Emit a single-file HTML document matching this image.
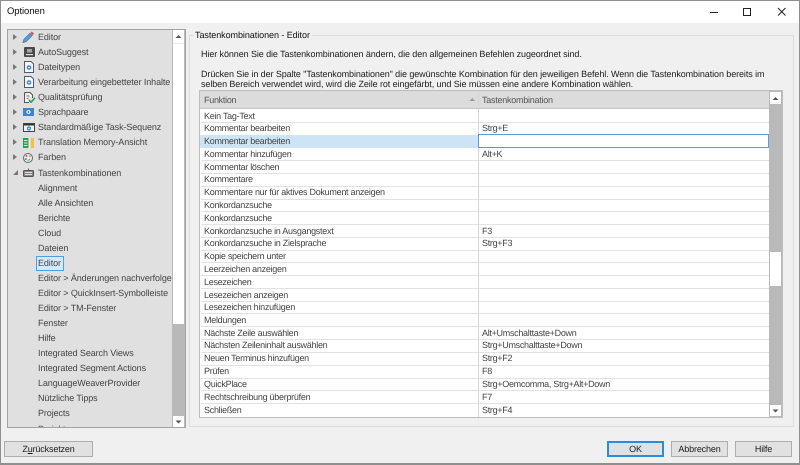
<!DOCTYPE html>
<html><head><meta charset="utf-8">
<style>
html,body{margin:0;padding:0;width:800px;height:465px;overflow:hidden;background:#f0f0f0}
body{position:relative;font-family:"Liberation Sans",sans-serif;font-size:9px;color:#3c3c3c;text-rendering:geometricPrecision}
div,span,svg{position:absolute;box-sizing:border-box;white-space:nowrap}
#w{left:0;top:0;width:800px;height:465px;filter:blur(.3px)}
.t{line-height:12px;height:12px}
.tr{left:38px;color:#444;font-size:9px;letter-spacing:-.1px}
.arr{left:13px;width:0;height:0;border-left:4px solid #777;border-top:3.500px solid transparent;border-bottom:3.500px solid transparent}
.c1{left:204px;color:#444;font-size:9px;letter-spacing:-.28px}
.c2{left:482px;color:#444;font-size:9px;letter-spacing:-.3px}
.ln{left:201px;width:568px;height:1px;background:#e2e2e2}
.d{color:#1c1c1c;font-size:9px;left:201px;letter-spacing:-.09px}
.btn{background:#e1e1e1;border:1px solid #adadad;text-align:center;line-height:14px;color:#1c1c1c;font-size:9px;letter-spacing:-.15px}
.sb{background:#fff}
</style></head><body><div id="w">
<!-- window -->
<div style="left:0;top:0;width:800px;height:465px;border:1px solid #8f8f8f;border-bottom-width:2px;background:#f0f0f0"></div>
<div style="left:1px;top:1px;width:798px;height:22px;background:#fff"></div>
<div class="t" style="left:7px;top:6px;font-size:9.500px;color:#111;letter-spacing:-.1px">Optionen</div>
<svg style="left:700px;top:3px" width="96" height="18" viewBox="0 0 96 18" fill="none" stroke="#222">
<path d="M10 9.500h8"/><path d="M43.500 5.500h7v7h-7z"/><path d="M78 5l7.500 7.500M85.500 5L78 12.500"/></svg>

<!-- left tree -->
<div style="left:7px;top:29px;width:179px;height:399px;background:#e0e0e0;border:1px solid #a3a3a3;overflow:hidden">
 <div class="tr t" style="left:30px;top:393px;color:#555">Projekte</div>
</div>
<div style="left:172px;top:30px;width:13px;height:397px;background:#b9b9b9"></div>
<div class="sb" style="left:173px;top:30px;width:11px;height:294px"></div>
<div class="sb" style="left:173px;top:416px;width:11px;height:11px"></div>
<div style="left:173px;top:43px;width:11px;height:1px;background:#ececec"></div>
<svg style="left:173px;top:33px" width="11" height="6"><path d="M2.500 5h6L5.500 2z" fill="#555"/></svg>
<svg style="left:173px;top:419px" width="11" height="6"><path d="M2.500 1.500h6L5.500 4.500z" fill="#555"/></svg>

<div class="arr" style="top:33.500px"></div><div class="arr" style="top:48.500px"></div><div class="arr" style="top:63.500px"></div><div class="arr" style="top:78.500px"></div><div class="arr" style="top:93.500px"></div><div class="arr" style="top:108.500px"></div><div class="arr" style="top:123.500px"></div><div class="arr" style="top:138.500px"></div><div class="arr" style="top:153.500px"></div>
<svg style="left:12px;top:169px" width="7" height="7"><path d="M1 6h5V1z" fill="#777"/></svg>

<!-- tree icons -->
<svg style="left:22px;top:31px" width="13" height="13"><path d="M.8 11.700l1-3.300 6.200-6.200 2.300 2.300-6.200 6.200z" fill="#5b9bd5" stroke="#3f6f9f" stroke-width=".6"/><path d="M8.500 1.800l1.300-1.300 2.300 2.300-1.300 1.300z" fill="#e04a3a"/></svg>
<svg style="left:24px;top:47px" width="11" height="10"><rect x="0" y="0" width="11" height="10" rx="1" fill="#4a4a4a"/><rect x="3" y="2" width="5" height="3.500" fill="#a5a5a5"/><rect x="2" y="7" width="7" height="1.200" fill="#ddd"/></svg>
<svg style="left:24px;top:61px" width="10" height="12"><path d="M.5.500h6.500l2.500 2.500v8.500H.5z" fill="#f5f5f5" stroke="#4d5b6b"/><circle cx="5" cy="6.500" r="2.300" fill="#3d85c6"/><circle cx="5" cy="6.500" r=".9" fill="#fff"/></svg>
<svg style="left:24px;top:76px" width="10" height="12"><path d="M.5.500h6.500l2.500 2.500v8.500H.5z" fill="#f5f5f5" stroke="#4d5b6b"/><circle cx="5" cy="6.500" r="2.300" fill="#3d85c6"/><circle cx="5" cy="6.500" r=".9" fill="#fff"/></svg>
<svg style="left:24px;top:92px" width="12" height="11"><path d="M.5.500h5.500l2.500 2.500V6M5 10.500H.5V.500" fill="#f5f5f5" stroke="#555"/><path d="M2.500 4h3M2.500 6.500h2" stroke="#888"/><path d="M5 8l2 2.300 4-4.500" fill="none" stroke="#1f9d55" stroke-width="1.500"/></svg>
<svg style="left:23px;top:108px" width="11" height="8"><rect x="0" y="0" width="11" height="8" fill="#3d85c6"/><circle cx="5.500" cy="4" r="2.100" fill="#dceaf7"/><rect x="5" y="2.800" width="1" height="2.400" fill="#3d85c6"/></svg>
<svg style="left:23px;top:123px" width="12" height="9"><rect x=".5" y=".5" width="11" height="8" fill="#eef3f8" stroke="#444"/><rect x="1" y="1" width="10" height="1.500" fill="#333"/><circle cx="6" cy="5.500" r="2.100" fill="#3d85c6"/><circle cx="6" cy="5.500" r=".8" fill="#fff"/></svg>
<svg style="left:23px;top:138px" width="11" height="10"><rect x="0" y="0" width="5.500" height="10" fill="#2e9e4f"/><rect x="5.500" y="0" width="2" height="10" fill="#eee"/><rect x="7.500" y="0" width="3.500" height="10" fill="#f0c24b"/><path d="M1 2.500h3.500M1 5h3.500M1 7.500h3.500" stroke="#d5f0dd"/></svg>
<svg style="left:23px;top:153px" width="10" height="10"><circle cx="5" cy="5" r="4.500" fill="#eee" stroke="#666"/><circle cx="3.500" cy="3" r="1" fill="#d9534f"/><circle cx="6.800" cy="3.300" r="1" fill="#e0a030"/><circle cx="2.800" cy="6" r="1" fill="#3d85c6"/><path d="M4.500 8l2.500-2" stroke="#4a9"/></svg>
<svg style="left:23px;top:168px" width="11" height="9"><path d="M5.500 3V.5" stroke="#666"/><rect x=".5" y="2.500" width="10" height="6" rx="1" fill="#888" stroke="#555"/><path d="M2 4.500h7M2 6.500h7" stroke="#ddd"/></svg>

<div class="tr t" style="top:31px">Editor</div>
<div class="tr t" style="top:46px">AutoSuggest</div>
<div class="tr t" style="top:61px">Dateitypen</div>
<div class="tr t" style="top:76px">Verarbeitung eingebetteter Inhalte</div>
<div class="tr t" style="top:91px">Qualitätsprüfung</div>
<div class="tr t" style="top:106px">Sprachpaare</div>
<div class="tr t" style="top:121px">Standardmäßige Task-Sequenz</div>
<div class="tr t" style="top:136px">Translation Memory-Ansicht</div>
<div class="tr t" style="top:151px">Farben</div>
<div class="tr t" style="top:167px">Tastenkombinationen</div>
<div class="tr t" style="top:182px">Alignment</div>
<div class="tr t" style="top:197px">Alle Ansichten</div>
<div class="tr t" style="top:212px">Berichte</div>
<div class="tr t" style="top:227px">Cloud</div>
<div class="tr t" style="top:242px">Dateien</div>
<div style="left:36px;top:256px;width:28px;height:15px;background:#d6e9f8;border:1px solid #4f9fdc"></div>
<div class="tr t" style="top:257px">Editor</div>
<div class="tr t" style="top:272px">Editor &gt; Änderungen nachverfolge</div>
<div class="tr t" style="top:287px">Editor &gt; QuickInsert-Symbolleiste</div>
<div class="tr t" style="top:302px">Editor &gt; TM-Fenster</div>
<div class="tr t" style="top:317px">Fenster</div>
<div class="tr t" style="top:332px">Hilfe</div>
<div class="tr t" style="top:347px">Integrated Search Views</div>
<div class="tr t" style="top:362px">Integrated Segment Actions</div>
<div class="tr t" style="top:377px">LanguageWeaverProvider</div>
<div class="tr t" style="top:392px">Nützliche Tipps</div>
<div class="tr t" style="top:407px">Projects</div>

<!-- group box -->
<div style="left:189px;top:35px;width:605px;height:392px;border:1px solid #dcdcdc"></div>
<div class="t" style="left:194px;top:29px;background:#f0f0f0;padding:0 2px 0 1px;color:#111;font-size:9px;letter-spacing:-.06px">Tastenkombinationen - Editor</div>
<div class="t d" style="top:48px">Hier können Sie die Tastenkombinationen ändern, die den allgemeinen Befehlen zugeordnet sind.</div>
<div class="t d" style="top:68px">Drücken Sie in der Spalte "Tastenkombinationen" die gewünschte Kombination für den jeweiligen Befehl. Wenn die Tastenkombination bereits im</div>
<div class="t d" style="top:78px">selben Bereich verwendet wird, wird die Zeile rot eingefärbt, und Sie müssen eine andere Kombination wählen.</div>

<!-- grid -->
<div style="left:199px;top:90px;width:584px;height:328px;background:#fff;border:1px solid #bdbdbd"></div>
<div style="left:200px;top:91px;width:569px;height:18px;background:#dcdcdc;border-bottom:1px solid #c4c4c4"></div>
<div style="left:478px;top:91px;width:1px;height:326px;background:#d6d6d6"></div>
<div class="t c1" style="top:94px;color:#555">Funktion</div>
<div class="t c2" style="top:94px;color:#555;letter-spacing:-.25px">Tastenkombination</div>
<svg style="left:469px;top:97px" width="7" height="5"><path d="M.5 4h5.500L3.250 1z" fill="#999"/></svg>

<div class="ln" style="top:122px"></div><div class="ln" style="top:135px"></div><div class="ln" style="top:147px"></div><div class="ln" style="top:160px"></div><div class="ln" style="top:173px"></div><div class="ln" style="top:186px"></div><div class="ln" style="top:199px"></div><div class="ln" style="top:211px"></div><div class="ln" style="top:224px"></div><div class="ln" style="top:237px"></div><div class="ln" style="top:250px"></div><div class="ln" style="top:262px"></div><div class="ln" style="top:275px"></div><div class="ln" style="top:288px"></div><div class="ln" style="top:301px"></div><div class="ln" style="top:313px"></div><div class="ln" style="top:326px"></div><div class="ln" style="top:339px"></div><div class="ln" style="top:352px"></div><div class="ln" style="top:365px"></div><div class="ln" style="top:378px"></div><div class="ln" style="top:390px"></div><div class="ln" style="top:403px"></div>
<div style="left:200px;top:135px;width:278px;height:13px;background:#cce4f5"></div>
<div style="left:478px;top:134px;width:291px;height:14px;background:#fff;border:1px solid #5a9fd4"></div>

<div class="t c1" style="top:110px">Kein Tag-Text</div>
<div class="t c1" style="top:122px">Kommentar bearbeiten</div><div class="t c2" style="top:122px">Strg+E</div>
<div class="t c1" style="top:135px">Kommentar bearbeiten</div>
<div class="t c1" style="top:148px">Kommentar hinzufügen</div><div class="t c2" style="top:148px">Alt+K</div>
<div class="t c1" style="top:161px">Kommentar löschen</div>
<div class="t c1" style="top:173px">Kommentare</div>
<div class="t c1" style="top:186px">Kommentare nur für aktives Dokument anzeigen</div>
<div class="t c1" style="top:199px">Konkordanzsuche</div>
<div class="t c1" style="top:212px">Konkordanzsuche</div>
<div class="t c1" style="top:225px">Konkordanzsuche in Ausgangstext</div><div class="t c2" style="top:225px">F3</div>
<div class="t c1" style="top:237px">Konkordanzsuche in Zielsprache</div><div class="t c2" style="top:237px">Strg+F3</div>
<div class="t c1" style="top:250px">Kopie speichern unter</div>
<div class="t c1" style="top:263px">Leerzeichen anzeigen</div>
<div class="t c1" style="top:276px">Lesezeichen</div>
<div class="t c1" style="top:289px">Lesezeichen anzeigen</div>
<div class="t c1" style="top:301px">Lesezeichen hinzufügen</div>
<div class="t c1" style="top:314px">Meldungen</div>
<div class="t c1" style="top:327px">Nächste Zeile auswählen</div><div class="t c2" style="top:327px">Alt+Umschalttaste+Down</div>
<div class="t c1" style="top:339px">Nächsten Zeileninhalt auswählen</div><div class="t c2" style="top:339px">Strg+Umschalttaste+Down</div>
<div class="t c1" style="top:352px">Neuen Terminus hinzufügen</div><div class="t c2" style="top:352px">Strg+F2</div>
<div class="t c1" style="top:365px">Prüfen</div><div class="t c2" style="top:365px">F8</div>
<div class="t c1" style="top:378px">QuickPlace</div><div class="t c2" style="top:378px">Strg+Oemcomma, Strg+Alt+Down</div>
<div class="t c1" style="top:391px">Rechtschreibung überprüfen</div><div class="t c2" style="top:391px">F7</div>
<div class="t c1" style="top:404px">Schließen</div><div class="t c2" style="top:404px">Strg+F4</div>

<div style="left:769px;top:91px;width:13px;height:326px;background:#b9b9b9"></div>
<div class="sb" style="left:770px;top:92px;width:11px;height:12px"></div>
<div class="sb" style="left:770px;top:252px;width:11px;height:34px"></div>
<div class="sb" style="left:770px;top:405px;width:11px;height:11px"></div>
<svg style="left:770px;top:95px" width="11" height="6"><path d="M2.500 5h6L5.500 2z" fill="#555"/></svg>
<svg style="left:770px;top:408px" width="11" height="6"><path d="M2.500 1.500h6L5.500 4.500z" fill="#555"/></svg>

<!-- buttons -->
<div class="btn" style="left:4px;top:441px;width:89px;height:16px">Z<span style="position:static;text-decoration:underline">u</span>rücksetzen</div>
<div class="btn" style="left:607px;top:441px;width:57px;height:16px;border:2px solid #2f8ad8;line-height:12px">OK</div>
<div class="btn" style="left:671px;top:441px;width:57px;height:16px">Abbrechen</div>
<div class="btn" style="left:735px;top:441px;width:57px;height:16px">Hilfe</div>
</div></body></html>
